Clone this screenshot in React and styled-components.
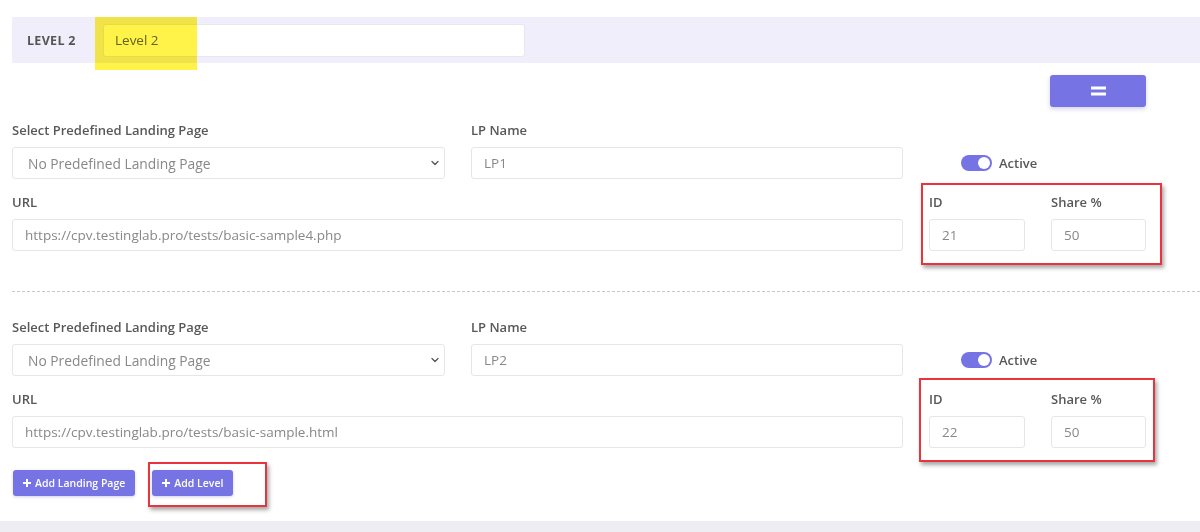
import React from 'react';
import styled, {createGlobalStyle} from 'styled-components';
import {ChevronDown} from 'lucide-react';

const GlobalStyle = createGlobalStyle`
	body {
		margin: 0;
		background: #fff;
		font-family: 'Open Sans', 'Lato', sans-serif;
		color: #555;
	}
`;

const StyledPage = styled.div`
	padding: 17px 0 0 12px;
	width: 1188px;
	overflow: hidden;
`;

const StyledLevelBar = styled.div`
	position: relative;
	display: flex;
	align-items: center;
	height: 46px;
	background-color: #f0eefa;
	padding-left: 15px;
`;

const StyledLevelTitle = styled.span`
	font-size: 12.5px;
	font-weight: 700;
	color: #555;
	width: 76px;
	letter-spacing: 0.3px;
`;

const StyledLevelInput = styled.input`
	width: 422px;
	height: 33px;
	box-sizing: border-box;
	border: 1px solid #e8e6f0;
	border-radius: 3px;
	background: #fff;
	padding: 0 11px;
	font: inherit;
	font-size: 13.5px;
	color: #666;
	outline: none;
`;

const StyledHighlight = styled.div`
	position: absolute;
	left: 83px;
	top: 0;
	width: 102px;
	height: 53px;
	background-color: #fff34a;
	mix-blend-mode: multiply;
	pointer-events: none;
`;

const StyledDragRow = styled.div`
	display: flex;
	justify-content: flex-end;
	width: 1134px;
	margin-top: 12px;
	margin-bottom: 14px;
`;

const StyledDragButton = styled.button`
	width: 96px;
	height: 32px;
	border: none;
	border-radius: 3px;
	background-color: #7673e4;
	box-shadow: 0 2px 4px rgba(80, 70, 180, 0.25);
	display: flex;
	align-items: center;
	justify-content: center;
	padding: 0;
	cursor: pointer;
`;

const StyledLandingPage = styled.div`
	display: grid;
	grid-template-columns: 433px 432px 217px;
	column-gap: 26px;
	row-gap: 14px;
	width: 1134px;
`;

const StyledField = styled.div`
	display: flex;
	flex-direction: column;
	grid-column: ${({span}) => (span ? `span ${span}` : 'auto')};
`;

const StyledLabel = styled.label`
	font-size: 13px;
	line-height: 18px;
	font-weight: 600;
	color: #585858;
	margin-bottom: 8px;
`;

const StyledInput = styled.input`
	height: 32px;
	box-sizing: border-box;
	border: 1px solid #e6e6e6;
	border-radius: 3px;
	padding: 0 12px;
	font: inherit;
	font-size: 13.5px;
	color: #888;
	background: #fff;
	outline: none;
	width: 100%;
`;

const StyledSelectWrap = styled.div`
	position: relative;
`;

const StyledSelect = styled.select`
	appearance: none;
	width: 100%;
	height: 32px;
	box-sizing: border-box;
	border: 1px solid #e6e6e6;
	border-radius: 3px;
	padding: 0 15px;
	font: inherit;
	font-size: 13.8px;
	color: #888;
	background: #fff;
	outline: none;
`;

const StyledChevron = styled.span`
	position: absolute;
	right: 4px;
	top: 10px;
	color: #555;
	display: flex;
	pointer-events: none;
`;

const StyledToggleCell = styled.div`
	display: flex;
	align-items: center;
	align-self: end;
	height: 32px;
	padding-left: 32px;
	gap: 7px;
`;

const StyledTrack = styled.span`
	position: relative;
	width: 31px;
	height: 16px;
	border-radius: 8px;
	background-color: #7673e4;
	display: inline-block;
`;

const StyledKnob = styled.span`
	position: absolute;
	right: 2px;
	top: 2px;
	width: 12px;
	height: 12px;
	border-radius: 50%;
	background: #fff;
`;

const StyledToggleText = styled.span`
	font-size: 13px;
	font-weight: 600;
	color: #585858;
`;

const StyledIdGroup = styled.div`
	position: relative;
	display: grid;
	grid-template-columns: 96px 95px;
	column-gap: 26px;
`;

const StyledAnnotation = styled.div`
	position: absolute;
	top: ${({t}) => t}px;
	left: ${({l}) => l}px;
	right: ${({r}) => r}px;
	bottom: ${({b}) => b}px;
	border: 2px solid #e8353b;
	box-shadow: 2px 3px 4px rgba(0, 0, 0, 0.35);
	pointer-events: none;
`;

const StyledDivider = styled.hr`
	border: none;
	border-top: 1px dashed #c9c9c9;
	margin: 40px 0 26px;
	height: 0;
`;

const StyledActions = styled.div`
	display: flex;
	gap: 17px;
	margin: 22px 0 25px 1px;
`;

const StyledActionWrap = styled.div`
	position: relative;
`;

const StyledActionButton = styled.button`
	height: 26px;
	border: none;
	border-radius: 3px;
	background-color: #7673e4;
	color: #fff;
	font-family: inherit;
	font-size: 10.5px;
	font-weight: 600;
	padding: 0 10px;
	display: flex;
	align-items: center;
	gap: 4px;
	box-shadow: 0 1px 3px rgba(80, 70, 180, 0.25);
	cursor: pointer;
`;

const StyledFooterBand = styled.div`
	height: 12px;
	background-color: #ededf3;
	margin-left: -12px;
	width: 1200px;
`;

function PlusIcon() {
	return (
		<svg width="8" height="8" viewBox="0 0 8 8">
			<path d="M3 0h2v3h3v2H5v3H3V5H0V3h3z" fill="#fff" />
		</svg>
	);
}

function EqualsIcon() {
	return (
		<svg width="15" height="10" viewBox="0 0 15 10">
			<rect x="0" y="0.5" width="15" height="3" fill="#fff" />
			<rect x="0" y="6.5" width="15" height="3" fill="#fff" />
		</svg>
	);
}

const landingPages = [
	{name: 'LP1', url: 'https://cpv.testinglab.pro/tests/basic-sample4.php', id: 21, share: 50, box: {t: -10, l: -8, r: -16, b: -14}},
	{name: 'LP2', url: 'https://cpv.testinglab.pro/tests/basic-sample.html', id: 22, share: 50, box: {t: -12, l: -10, r: -9, b: -14}},
];

function LandingPage({lp}) {
	return (
		<StyledLandingPage>
			<StyledField>
				<StyledLabel>Select Predefined Landing Page</StyledLabel>
				<StyledSelectWrap>
					<StyledSelect defaultValue="none">
						<option value="none">No Predefined Landing Page</option>
					</StyledSelect>
					<StyledChevron>
						<ChevronDown size={12} strokeWidth={2.5} />
					</StyledChevron>
				</StyledSelectWrap>
			</StyledField>
			<StyledField>
				<StyledLabel>LP Name</StyledLabel>
				<StyledInput defaultValue={lp.name} />
			</StyledField>
			<StyledToggleCell>
				<StyledTrack>
					<StyledKnob />
				</StyledTrack>
				<StyledToggleText>Active</StyledToggleText>
			</StyledToggleCell>
			<StyledField span={2}>
				<StyledLabel>URL</StyledLabel>
				<StyledInput defaultValue={lp.url} />
			</StyledField>
			<StyledIdGroup>
				<StyledField>
					<StyledLabel>ID</StyledLabel>
					<StyledInput defaultValue={lp.id} />
				</StyledField>
				<StyledField>
					<StyledLabel>Share %</StyledLabel>
					<StyledInput defaultValue={lp.share} />
				</StyledField>
				<StyledAnnotation {...lp.box} />
			</StyledIdGroup>
		</StyledLandingPage>
	);
}

export default function App() {
	return (
		<>
			<GlobalStyle />
			<StyledPage>
				<StyledLevelBar>
					<StyledLevelTitle>LEVEL 2</StyledLevelTitle>
					<StyledLevelInput defaultValue="Level 2" />
					<StyledHighlight />
				</StyledLevelBar>
				<StyledDragRow>
					<StyledDragButton>
						<EqualsIcon />
					</StyledDragButton>
				</StyledDragRow>
				<LandingPage lp={landingPages[0]} />
				<StyledDivider />
				<LandingPage lp={landingPages[1]} />
				<StyledActions>
					<StyledActionButton>
						<PlusIcon /> Add Landing Page
					</StyledActionButton>
					<StyledActionWrap>
						<StyledActionButton>
							<PlusIcon /> Add Level
						</StyledActionButton>
						<StyledAnnotation t={-8} l={-4} r={-34} b={-11} />
					</StyledActionWrap>
				</StyledActions>
				<StyledFooterBand />
			</StyledPage>
		</>
	);
}
